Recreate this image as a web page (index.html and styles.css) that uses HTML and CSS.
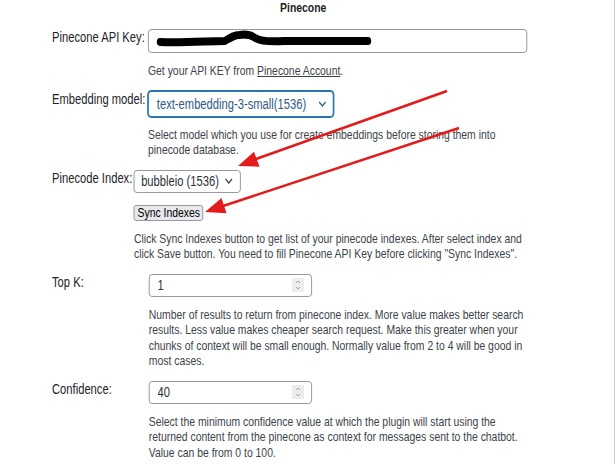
FILE: index.html
```html
<!DOCTYPE html>
<html lang="en">
<head>
    <meta charset="UTF-8">
    <meta name="viewport" content="width=device-width, initial-scale=1.0">
    <title>Pinecone Settings</title>
    <link rel="stylesheet" href="styles.css">
</head>
<body>
    <div class="screen">
        <!-- the captured settings page is squeezed horizontally, like the screenshot -->
        <div class="page">
            <h2 class="section-title">Pinecone</h2>
            <div class="form">
                <div class="row">
                    <label class="row-label" for="apiKey">Pinecone API Key:</label>
                    <div class="row-field">
                        <div class="key-box">
                            <input type="text" id="apiKey" class="text-input key-input" value="">
                            <svg class="redacted" width="290" height="22" viewBox="0 0 290 22">
                                <path d="M15 13 C45 14, 75 12, 96 12 C104 8, 108 6, 114 6 C122 5, 128 6, 132 8 C138 12, 150 13, 170 12 C210 12, 250 12, 275 12" stroke="#000" stroke-width="8" fill="none" stroke-linecap="round"/>
                                <path d="M112 6 L134 8" stroke="#000" stroke-width="5" stroke-linecap="round"/>
                            </svg>
                        </div>
                        <p class="help">Get your API KEY from <a href="#">Pinecone Account</a>.</p>
                    </div>
                </div>

                <div class="row">
                    <label class="row-label" for="embedModel">Embedding model:</label>
                    <div class="row-field">
                        <div class="select-wrap select-model">
                            <select id="embedModel" class="select focused">
                                <option>text-embedding-3-small(1536)</option>
                            </select>
                            <svg class="chevron chevron-model" width="10" height="6" viewBox="0 0 10 6"><path d="M1 1 L5 5 L9 1" stroke="#2d5b86" stroke-width="1.5" fill="none"/></svg>
                        </div>
                        <p class="help">Select model which you use for create embeddings before storing them into pinecode database.</p>
                    </div>
                </div>

                <div class="row">
                    <label class="row-label label-auto" for="pineIndex">Pinecode Index:</label>
                    <div class="row-field">
                        <div class="select-wrap select-index">
                            <select id="pineIndex" class="select">
                                <option>bubbleio (1536)</option>
                            </select>
                            <svg class="chevron" width="10" height="6" viewBox="0 0 10 6"><path d="M1 1 L5 5 L9 1" stroke="#3c434a" stroke-width="1.5" fill="none"/></svg>
                        </div>
                        <button type="button" class="sync-btn">Sync Indexes</button>
                        <p class="help help-wide">Click Sync Indexes button to get list of your pinecode indexes. After select index and click Save button. You need to fill Pinecone API Key before clicking "Sync Indexes".</p>
                    </div>
                </div>

                <div class="row">
                    <label class="row-label label-num" for="topK">Top K:</label>
                    <div class="row-field">
                        <div class="number-box">
                            <input type="text" id="topK" class="number-input" value="1">
                            <svg class="spinner" width="15" height="14" viewBox="0 0 15 14"><rect width="15" height="14" fill="#ededed"/><path d="M5 5 L7.5 3 L10 5 M5 9 L7.5 11 L10 9" stroke="#9a9a9a" stroke-width="1" fill="none"/></svg>
                        </div>
                        <p class="help">Number of results to return from pinecone index. More value makes better search results. Less value makes cheaper search request. Make this greater when your chunks of context will be small enough. Normally value from 2 to 4 will be good in most cases.</p>
                    </div>
                </div>

                <div class="row">
                    <label class="row-label label-num" for="confidence">Confidence:</label>
                    <div class="row-field">
                        <div class="number-box">
                            <input type="text" id="confidence" class="number-input" value="40">
                            <svg class="spinner" width="15" height="14" viewBox="0 0 15 14"><rect width="15" height="14" fill="#ededed"/><path d="M5 5 L7.5 3 L10 5 M5 9 L7.5 11 L10 9" stroke="#9a9a9a" stroke-width="1" fill="none"/></svg>
                        </div>
                        <p class="help">Select the minimum confidence value at which the plugin will start using the returned content from the pinecone as context for messages sent to the chatbot. Value can be from 0 to 100.</p>
                    </div>
                </div>
            </div>
        </div>

        <!-- red annotation arrows drawn over the screenshot -->
        <svg class="annotations" width="615" height="464" viewBox="0 0 615 464">
            <line x1="447" y1="91" x2="256" y2="159" stroke="#e31b1b" stroke-width="2.5"/>
            <polygon points="238,166 259.5,166.7 254,151.7" fill="#e31b1b"/>
            <line x1="459" y1="128" x2="223" y2="206" stroke="#e31b1b" stroke-width="2.5"/>
            <polygon points="205,212 226.5,213.3 221.5,198.1" fill="#e31b1b"/>
        </svg>
    </div>
</body>
</html>
```

FILE: styles.css
```css
body {
    margin: 0;
    font-family: "Liberation Sans", Arial, sans-serif;
    color: #2c3338;
    background: #fff;
}
.screen {
    position: relative;
    width: 615px;
    height: 464px;
    box-sizing: border-box;
    border-right: 1px solid #cbcbcb;
    overflow: hidden;
}
.page {
    width: 769px;
    transform: scaleX(0.8);
    transform-origin: 0 0;
}
.section-title {
    margin: 0;
    padding-right: 11px;
    font-size: 13px;
    line-height: 15px;
    font-weight: bold;
    text-align: center;
    color: #1d2327;
}
.form {
    padding-left: 65px;
    padding-top: 14px;
}
.row {
    display: flex;
    align-items: flex-start;
    margin-bottom: 12px;
}
.row-label {
    width: 120px;
    flex-shrink: 0;
    white-space: nowrap;
    font-size: 14px;
    line-height: 16px;
    color: #1d2327;
}
.label-auto {
    width: auto;
    margin-right: 2px;
}
.label-num {
    width: 121px;
}
.row-field {
    display: flex;
    flex-direction: column;
    align-items: flex-start;
}
.help {
    margin: 10px 0 0 0;
    width: 476px;
    font-size: 13px;
    line-height: 15.5px;
    color: #3c434a;
}
.help-wide {
    width: 492px;
}
.help a {
    color: #3c434a;
}
.text-input {
    box-sizing: border-box;
    border: 1px solid #8c8f94;
    border-radius: 4px;
    background: #fff;
}
.key-box {
    position: relative;
    width: 474px;
    height: 24px;
}
.key-input {
    width: 100%;
    height: 100%;
}
.redacted {
    position: absolute;
    left: 0;
    top: 0;
}
.select-wrap {
    position: relative;
}
.select {
    appearance: none;
    -webkit-appearance: none;
    box-sizing: border-box;
    width: 100%;
    height: 100%;
    margin: 0;
    padding: 0 0 0 8px;
    font-family: inherit;
    font-size: 14px;
    color: #2c3338;
    background: #fff;
    border: 1px solid #8c8f94;
    border-radius: 4px;
}
.select.focused {
    border-color: #2271b1;
    box-shadow: 0 0 0 1px #2271b1;
    color: #2d5b86;
    padding-left: 10px;
}
.select-model {
    width: 232px;
    height: 26px;
}
.select-index {
    width: 134px;
    height: 23px;
}
.chevron {
    position: absolute;
    right: 10px;
    top: 50%;
    margin-top: -3px;
}
.chevron-model {
    right: 9px;
}
.sync-btn {
    margin-top: 12px;
    width: 87px;
    height: 16px;
    padding: 0;
    font-family: inherit;
    font-size: 13px;
    line-height: 14px;
    color: #000;
    background: #e9e9ed;
    border: 1px solid #8f8f9d;
    border-radius: 3px;
}
.number-box {
    display: flex;
    align-items: center;
    box-sizing: border-box;
    width: 204px;
    height: 23px;
    padding: 0 9px 0 10px;
    border: 1px solid #8c8f94;
    border-radius: 4px;
}
.number-input {
    flex: 1;
    min-width: 0;
    border: none;
    padding: 0;
    font-family: inherit;
    font-size: 14px;
    color: #2c3338;
    outline: none;
}
.annotations {
    position: absolute;
    left: 0;
    top: 0;
    pointer-events: none;
}
```
